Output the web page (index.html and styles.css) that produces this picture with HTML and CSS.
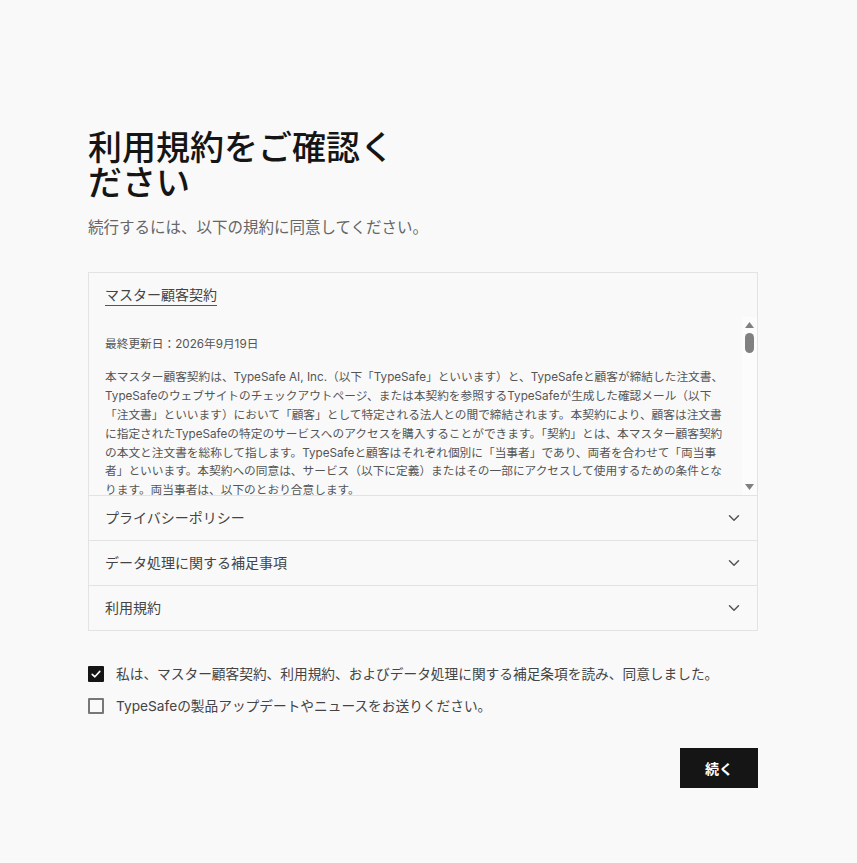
FILE: index.html
```html
<!DOCTYPE html>
<html lang="ja">
<head>
<meta charset="utf-8">
<title>利用規約をご確認ください</title>
<link rel="stylesheet" href="styles.css">
</head>
<body>
<main class="page">
  <h1 class="title">利用規約をご確認ください</h1>
  <p class="subtitle">続行するには、以下の規約に同意してください。</p>

  <section class="terms">
    <div class="terms-item open">
      <div class="terms-head"><span class="terms-name underline">マスター顧客契約</span></div>
      <div class="terms-scroll">
        <div class="terms-text">
          <p class="updated">最終更新日：2026年9月19日</p>
          <p>本マスター顧客契約は、TypeSafe AI, Inc.（以下「TypeSafe」といいます）と、TypeSafeと顧客が締結した注文書、TypeSafeのウェブサイトのチェックアウトページ、または本契約を参照するTypeSafeが生成した確認メール（以下「注文書」といいます）において「顧客」として特定される法人との間で締結されます。本契約により、顧客は注文書に指定されたTypeSafeの特定のサービスへのアクセスを購入することができます。「契約」とは、本マスター顧客契約の本文と注文書を総称して指します。TypeSafeと顧客はそれぞれ個別に「当事者」であり、両者を合わせて「両当事者」といいます。本契約への同意は、サービス（以下に定義）またはその一部にアクセスして使用するための条件となります。両当事者は、以下のとおり合意します。</p>
        </div>
        <div class="scrollbar" aria-hidden="true">
          <svg class="sb-arrow" viewBox="0 0 9 6" width="9" height="6"><path d="M4.5 0 9 6H0z"/></svg>
          <span class="sb-thumb"></span>
          <span class="sb-space"></span>
          <svg class="sb-arrow" viewBox="0 0 9 6" width="9" height="6"><path d="M0 0h9L4.5 6z"/></svg>
        </div>
      </div>
    </div>
    <div class="terms-item">
      <div class="terms-head"><span class="terms-name">プライバシーポリシー</span>
        <svg class="chev" viewBox="0 0 12 8" width="12" height="8"><path d="M1.5 1.8 6 6.2l4.5-4.4"/></svg></div>
    </div>
    <div class="terms-item">
      <div class="terms-head"><span class="terms-name">データ処理に関する補足事項</span>
        <svg class="chev" viewBox="0 0 12 8" width="12" height="8"><path d="M1.5 1.8 6 6.2l4.5-4.4"/></svg></div>
    </div>
    <div class="terms-item">
      <div class="terms-head"><span class="terms-name">利用規約</span>
        <svg class="chev" viewBox="0 0 12 8" width="12" height="8"><path d="M1.5 1.8 6 6.2l4.5-4.4"/></svg></div>
    </div>
  </section>

  <div class="checks">
    <label class="check">
      <span class="box checked"><svg viewBox="0 0 16 16" width="16" height="16"><path d="M4.2 8.3 6.9 10.8 11.8 5.4"/></svg></span>
      <span class="check-text">私は、マスター顧客契約、利用規約、およびデータ処理に関する補足条項を読み、同意しました。</span>
    </label>
    <label class="check">
      <span class="box"></span>
      <span class="check-text">TypeSafeの製品アップデートやニュースをお送りください。</span>
    </label>
  </div>

  <div class="actions">
    <button class="btn" type="button">続く</button>
  </div>
</main>
</body>
</html>
```
FILE: styles.css
```css
html, body {
  margin: 0;
  padding: 0;
  background: #f9f9f9;
}
body {
  font-family: Inter, "Noto Sans CJK JP", sans-serif;
  color: #222;
}
.page {
  width: 670px;
  padding: 130px 0 0 88px;
}
.title {
  margin: 0;
  max-width: 320px;
  font-size: 34px;
  line-height: 35px;
  font-weight: 500;
  color: #151515;
}
.subtitle {
  margin: 16px 0 0;
  font-size: 15.5px;
  line-height: 24px;
  color: #666;
}
.terms {
  margin-top: 32px;
  border: 1px solid #e3e3e3;
  background: #f9f9f9;
}
.terms-item + .terms-item {
  border-top: 1px solid #e3e3e3;
}
.terms-head {
  display: flex;
  align-items: center;
  justify-content: space-between;
  height: 44px;
  padding: 0 17px 0 16px;
}
.terms-name {
  font-size: 14px;
  line-height: 20px;
  color: #444;
}
.underline {
  text-decoration: underline;
  text-underline-offset: 5px;
  text-decoration-thickness: 1px;
  text-decoration-color: #555;
}
.chev {
  fill: none;
  stroke: #555;
  stroke-width: 1.5;
  stroke-linecap: round;
  stroke-linejoin: round;
}
.terms-scroll {
  display: flex;
  height: 178px;
}
.terms-text {
  flex: 1;
  min-width: 0;
  overflow: hidden;
  padding: 18px 17px 0 16px;
}
.terms-text p {
  margin: 0 0 12px;
  font-size: 11.7px;
  line-height: 18.9px;
  color: #555;
}
.terms-text .updated {
  margin-bottom: 14px;
}
.scrollbar {
  flex: none;
  width: 15px;
  background: #fcfcfc;
  display: flex;
  flex-direction: column;
  align-items: center;
  padding: 5px 0;
  box-sizing: border-box;
}
.sb-arrow {
  flex: none;
  fill: #808080;
}
.sb-thumb {
  flex: none;
  width: 9px;
  height: 20px;
  margin-top: 5px;
  border-radius: 5px;
  background: #808080;
}
.sb-space {
  flex: 1;
}
.checks {
  margin-top: 33px;
  display: flex;
  flex-direction: column;
  gap: 12px;
}
.check {
  display: flex;
  align-items: center;
  gap: 12px;
  height: 20px;
}
.box {
  box-sizing: border-box;
  width: 16px;
  height: 16px;
  border: 2px solid #777;
  border-radius: 1px;
  display: flex;
  align-items: center;
  justify-content: center;
  flex: none;
}
.box.checked {
  background: #151515;
  border-color: #151515;
}
.box svg {
  flex: none;
  fill: none;
  stroke: #fff;
  stroke-width: 1.6;
  stroke-linecap: round;
  stroke-linejoin: round;
}
.check-text {
  font-size: 13.7px;
  line-height: 20px;
  color: #444;
}
.actions {
  display: flex;
  justify-content: flex-end;
  margin-top: 32px;
}
.btn {
  font-family: Inter, "Noto Sans CJK JP", sans-serif;
  background: #151515;
  color: #fff;
  border: none;
  border-radius: 0;
  width: 78px;
  height: 40px;
  font-size: 14px;
  font-weight: 700;
  padding: 0;
}
```
